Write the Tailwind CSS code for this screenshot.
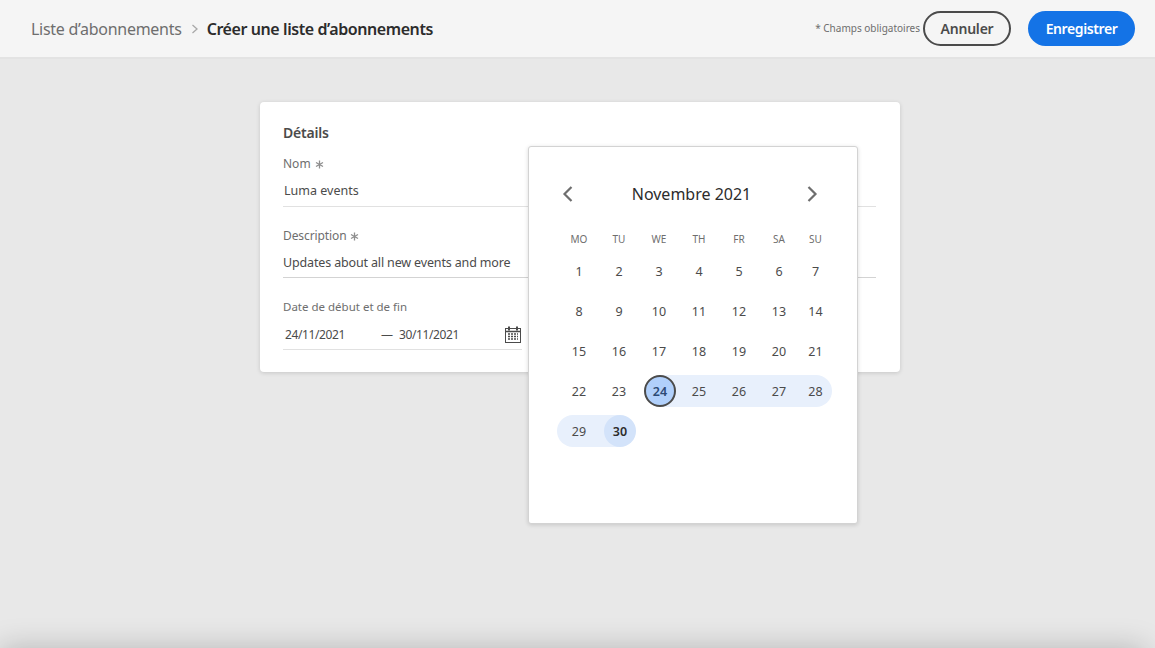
<!DOCTYPE html>
<html lang="fr">
<head>
  <meta charset="UTF-8" />
  <title>Créer une liste d'abonnements</title>
  <script src="https://cdn.jsdelivr.net/npm/@tailwindcss/browser@4"></script>
</head>
<body class="h-[648px] overflow-hidden bg-[#e8e8e8] font-['Noto_Sans',sans-serif] relative">
  <!-- Header -->
  <header class="h-[59px] bg-[#f5f5f5] border-b-2 border-[#e3e3e3] flex items-center pl-[31px] pr-5">
    <nav class="flex items-center text-[16px]">
      <span class="text-[#6e6e6e] tracking-[-0.27px]">Liste d’abonnements</span>
      <svg class="w-[8px] h-[10px] ml-[9px] mr-[8px] text-[#a8a8a8]" viewBox="0 0 8 10" fill="none" stroke="currentColor" stroke-width="1.3"><path d="M1.5 1l4.5 4-4.5 4" /></svg>
      <span class="font-semibold text-[#2c2c2c] tracking-[-0.42px]">Créer une liste d’abonnements</span>
    </nav>
    <div class="ml-auto flex items-center">
      <span class="text-[10px] text-[#6e6e6e] mr-[3px]">* Champs obligatoires</span>
      <button class="h-[35px] w-[88px] rounded-full border-2 border-[#4b4b4b] text-[14px] tracking-[-0.2px] font-semibold text-[#4b4b4b]">Annuler</button>
      <button class="h-[35px] w-[107px] ml-[17px] rounded-full bg-[#1473e6] text-[14px] tracking-[-0.4px] font-semibold text-white">Enregistrer</button>
    </div>
  </header>

  <!-- Details card -->
  <main class="pl-[260px] pt-[43px]">
    <section class="w-[640px] h-[270px] bg-white rounded-[4px] shadow-[0_1px_4px_rgba(0,0,0,0.15)] pt-[21px] pl-[23px] pr-6">
      <h2 class="text-[14px] leading-5 font-semibold text-[#4b4b4b] tracking-[-0.2px]">Détails</h2>
      <div class="mt-[13px] flex items-center gap-[4px] text-[12px] leading-4 text-[#6e6e6e]">Nom
        <svg class="w-[9px] h-[9px] text-[#8e8e8e]" viewBox="0 0 9 9" fill="none" stroke="currentColor" stroke-width="1.3"><path d="M4.5 0.5v8M1 2.5l7 4M8 2.5l-7 4" /></svg>
      </div>
      <div class="mt-[6px] h-[29px] border-b border-[#e1e1e1] pl-[1px] text-[12.5px] leading-[25px] text-[#4b4b4b]">Luma events</div>
      <div class="mt-[21px] flex items-center gap-[4px] text-[12px] leading-4 text-[#6e6e6e] tracking-[-0.1px]">Description
        <svg class="w-[9px] h-[9px] text-[#8e8e8e]" viewBox="0 0 9 9" fill="none" stroke="currentColor" stroke-width="1.3"><path d="M4.5 0.5v8M1 2.5l7 4M8 2.5l-7 4" /></svg>
      </div>
      <div class="mt-[6px] h-[28px] border-b border-[#d3d3d3] text-[12.5px] leading-[25px] tracking-[-0.15px] text-[#4b4b4b]">Updates about all new events and more</div>
      <div class="mt-[21px] text-[11.5px] leading-4 text-[#6e6e6e]">Date de début et de fin</div>
      <div class="mt-[6px] w-[239px] h-[29px] border-b border-[#e1e1e1] flex text-[12px] leading-[27px] tracking-[-0.4px] text-[#4b4b4b] pl-[2px]">
        <span class="w-[96px]">24/11/2021</span>
        <span class="w-[18px]">—</span>
        <span>30/11/2021</span>
        <svg class="ml-auto mt-[5px] w-[18px] h-[18px] text-[#4b4b4b]" viewBox="0 0 18 18" fill="none" stroke="currentColor">
          <rect x="1.5" y="2.5" width="15" height="14" />
          <path d="M1.5 5.5h15" stroke-width="1.5" />
          <path d="M5 0.5v4M13 0.5v4" stroke-width="2" />
          <path d="M4 8h10M4 10.5h10M4 13h10" stroke-width="1.5" stroke-dasharray="2 1" />
        </svg>
      </div>
    </section>
  </main>

  <!-- Calendar popover -->
  <div class="absolute left-[528px] top-[146px] w-[330px] h-[378px] bg-white rounded-[3px] border border-[#d3d3d3] shadow-[0_1px_4px_rgba(0,0,0,0.15)] pl-[30px]">
    <div class="flex items-center h-[26px] mt-[34px] w-[260px]">
      <svg class="w-[14px] h-[18px] ml-[2px] text-[#6e6e6e]" viewBox="0 0 14 18" fill="none" stroke="currentColor" stroke-width="2.2"><path d="M10.5 2L3.5 9l7 7" /></svg>
      <div class="flex-1 text-center pl-[3px] text-[16px] text-[#2c2c2c]">Novembre 2021</div>
      <svg class="w-[14px] h-[18px] text-[#6e6e6e]" viewBox="0 0 14 18" fill="none" stroke="currentColor" stroke-width="2.2"><path d="M3.5 2l7 7-7 7" /></svg>
    </div>
    <div class="grid grid-cols-[repeat(6,40px)_33px] mt-[24px] h-[16px] text-[10px] leading-4 text-center text-[#6e6e6e]">
      <div>MO</div><div>TU</div><div>WE</div><div>TH</div><div>FR</div><div>SA</div><div>SU</div>
    </div>
    <div class="grid grid-cols-[repeat(6,40px)_33px] auto-rows-[32px] gap-y-2 mt-[8px] text-[12.5px] leading-[34px] text-center text-[#4b4b4b]">
      <div>1</div><div>2</div><div>3</div><div>4</div><div>5</div><div>6</div><div>7</div>
      <div>8</div><div>9</div><div>10</div><div>11</div><div>12</div><div>13</div><div>14</div>
      <div>15</div><div>16</div><div>17</div><div>18</div><div>19</div><div>20</div><div>21</div>
      <div>22</div><div>23</div>
      <div class="bg-[linear-gradient(to_right,transparent_50%,#e8f0fc_50%)]"><div class="w-8 h-8 ml-[5px] rounded-full border-2 border-[#4b4b4b] bg-[#b1d0fb] font-semibold leading-[30px] text-[#2c4a75]">24</div></div>
      <div class="bg-[#e8f0fc]">25</div><div class="bg-[#e8f0fc]">26</div><div class="bg-[#e8f0fc]">27</div>
      <div class="bg-[#e8f0fc] rounded-r-full">28</div>
      <div class="bg-[#e8f0fc] rounded-l-full ml-[-2px] pl-[2px]">29</div>
      <div class="bg-[linear-gradient(to_right,#e8f0fc_50%,transparent_50%)]"><div class="w-8 h-8 ml-[5px] rounded-full bg-[#d3e3fa] font-semibold text-[#2c2c2c]">30</div></div>
    </div>
  </div>

  <!-- Shadow of the panel sitting just below the fold -->
  <div class="absolute inset-x-0 bottom-0 h-[50px] overflow-hidden">
    <div class="absolute left-0 right-[10px] top-[50px] h-10 shadow-[0_0_30px_rgba(0,0,0,0.22)]"></div>
  </div>
</body>
</html>
